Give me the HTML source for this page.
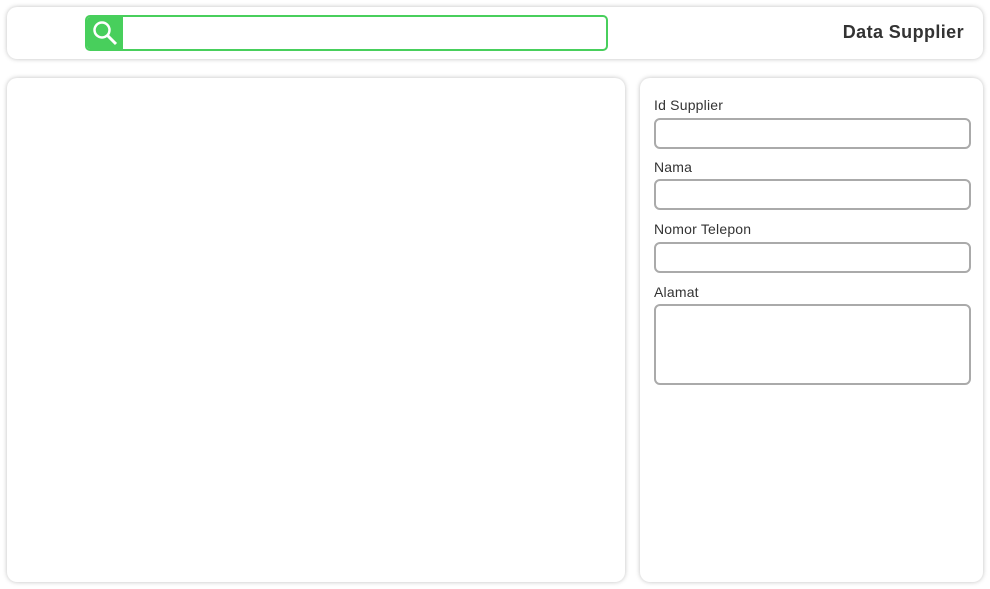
<!DOCTYPE html>
<html><head><style>
body{margin:0;width:990px;height:589px;background:#fff;font-family:"Liberation Sans",sans-serif;position:relative;overflow:hidden}
.card{position:absolute;background:#fff;border-radius:10px;box-shadow:0 0 5px rgba(0,0,0,.25)}
.inp{position:absolute;left:654px;border:2px solid #aaa;border-radius:6px;box-sizing:border-box;width:317px}
.lbl{position:absolute;left:654px;font-size:14px;color:#333;letter-spacing:.2px}
</style></head><body>
<div class="card" style="left:7px;top:7px;width:976px;height:52px"></div>
<div style="position:absolute;left:85px;top:15px;width:523px;height:36px;border:2px solid #48cf5c;border-radius:5px;box-sizing:border-box;overflow:hidden">
<div style="position:absolute;left:0;top:0;width:36px;height:32px;background:#48cf5c">
<svg width="36" height="32" viewBox="0 0 36 32"><circle cx="15" cy="13" r="7.5" fill="none" stroke="#fff" stroke-width="2.5"/><line x1="20.5" y1="18.5" x2="29" y2="27" stroke="#fff" stroke-width="3"/></svg>
</div></div>
<div style="position:absolute;right:26px;top:22px;font-size:18px;font-weight:bold;color:#333;letter-spacing:.4px">Data Supplier</div>
<div class="card" style="left:7px;top:78px;width:618px;height:504px"></div>
<div class="card" style="left:640px;top:78px;width:343px;height:504px"></div>
<div class="lbl" style="top:97px">Id Supplier</div>
<div class="inp" style="top:118px;height:31px"></div>
<div class="lbl" style="top:159px">Nama</div>
<div class="inp" style="top:179px;height:31px"></div>
<div class="lbl" style="top:221px">Nomor Telepon</div>
<div class="inp" style="top:242px;height:31px"></div>
<div class="lbl" style="top:284px">Alamat</div>
<div class="inp" style="top:304px;height:81px"></div>
</body></html>
